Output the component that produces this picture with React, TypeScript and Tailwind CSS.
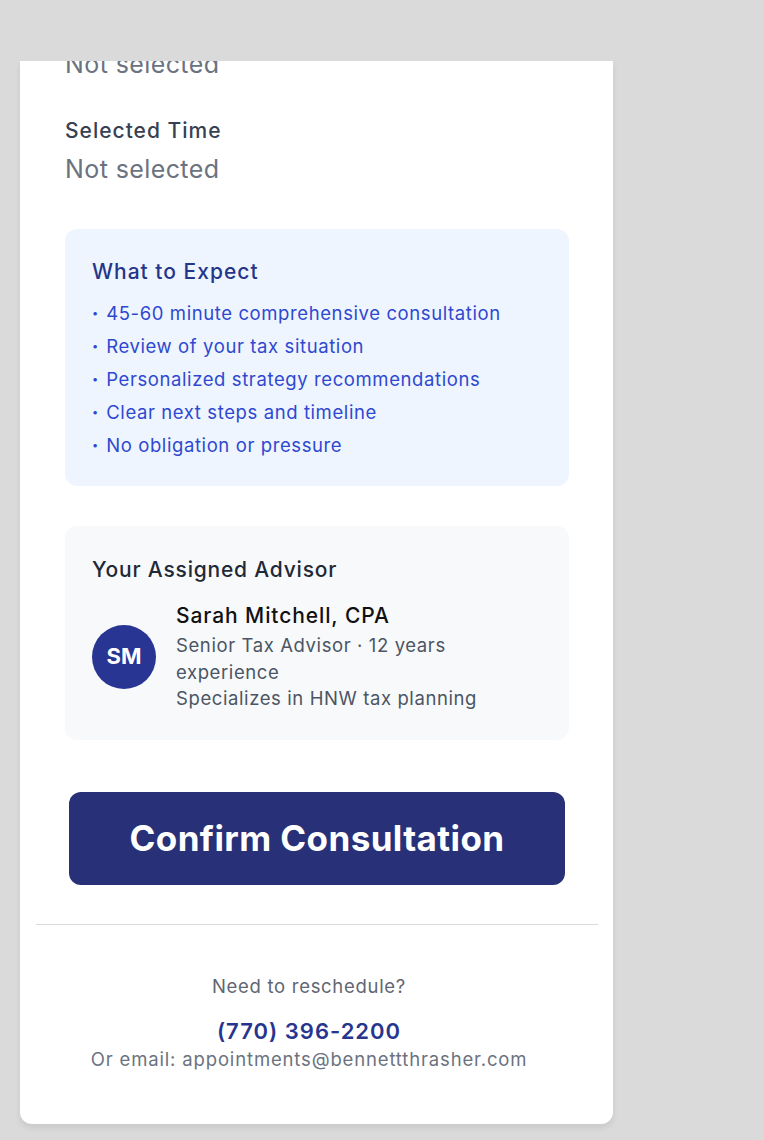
import * as React from 'react';

const expectations = [
  '45-60 minute comprehensive consultation',
  'Review of your tax situation',
  'Personalized strategy recommendations',
  'Clear next steps and timeline',
  'No obligation or pressure',
];

export default function App() {
  return (
    <div className="h-[1140px] overflow-hidden bg-[#dadada] pt-[61px] font-['Inter',sans-serif]">
      <div className="ml-[20px] w-[593px] overflow-hidden rounded-b-xl bg-white pl-[16px] pr-[15px] shadow-[0_4px_6px_rgba(0,0,0,0.08)]">
        <div className="px-[29px]">
          {/* previous field, scrolled mostly out of view */}
          <p className="-mt-[13px] text-[25px] leading-[32px] tracking-[0.4px] text-[#6b7280]">Not selected</p>

          <div className="mt-[37px]">
            <p className="text-[21px] font-medium leading-[28px] tracking-[1px] text-[#374151]">Selected Time</p>
            <p className="mt-[8px] text-[25px] leading-[32px] tracking-[0.4px] text-[#6b7280]">Not selected</p>
          </div>

          <div className="mt-[44px] rounded-xl bg-[#eef5fe] px-[27px] pb-[24px] pt-[28px]">
            <h3 className="text-[21px] font-medium leading-[30px] tracking-[1px] text-[#25358a]">What to Expect</h3>
            <ul className="mt-[10px]">
              {expectations.map((item) => (
                <li key={item} className="flex items-center gap-[8px] text-[18.5px] leading-[33px] tracking-[0.6px] text-[#2f48d0]">
                  <span className="text-[11px] tracking-normal">•</span>
                  <span>{item}</span>
                </li>
              ))}
            </ul>
          </div>

          <div className="mt-[40px] rounded-xl bg-[#f8f9fb] px-[27px] pb-[28px] pt-[30px]">
            <h3 className="text-[21px] font-medium leading-[28px] tracking-[0.8px] text-[#1f2937]">Your Assigned Advisor</h3>
            <div className="mt-[18px] flex items-center gap-[20px]">
              <div className="flex size-[64px] shrink-0 items-center justify-center rounded-full bg-[#283593] text-[22px] font-bold text-white">
                SM
              </div>
              <div className="max-w-[330px]">
                <p className="text-[21px] font-medium leading-[28px] tracking-[0.9px] text-[#111111]">Sarah Mitchell, CPA</p>
                <p className="mt-[2px] text-[18.5px] leading-[26.5px] tracking-[0.6px] text-[#4b5563]">
                  Senior Tax Advisor · 12 years experience
                </p>
                <p className="text-[18.5px] leading-[26.5px] tracking-[0.6px] text-[#4b5563]">Specializes in HNW tax planning</p>
              </div>
            </div>
          </div>

          <div className="mt-[52px] px-[4px]">
            <button className="flex h-[93px] w-full items-center justify-center rounded-xl bg-[#283078] text-[35px] font-bold tracking-[0.4px] text-white">
              Confirm Consultation
            </button>
          </div>
        </div>

        <div className="mt-[39px] border-t border-[#d9d9d9]" />

        <div className="pb-[52px] pr-[16px] pt-[48px] text-center">
          <p className="text-[18.5px] leading-[26px] tracking-[0.7px] text-[#5f6672]">Need to reschedule?</p>
          <p className="mt-[17px] text-[22px] font-semibold leading-[30px] tracking-[1px] text-[#27358f]">(770) 396-2200</p>
          <p className="text-[18.5px] leading-[26px] tracking-[0.85px] text-[#6b7280]">
            Or email: appointments@bennettthrasher.com
          </p>
        </div>
      </div>
    </div>
  );
}
